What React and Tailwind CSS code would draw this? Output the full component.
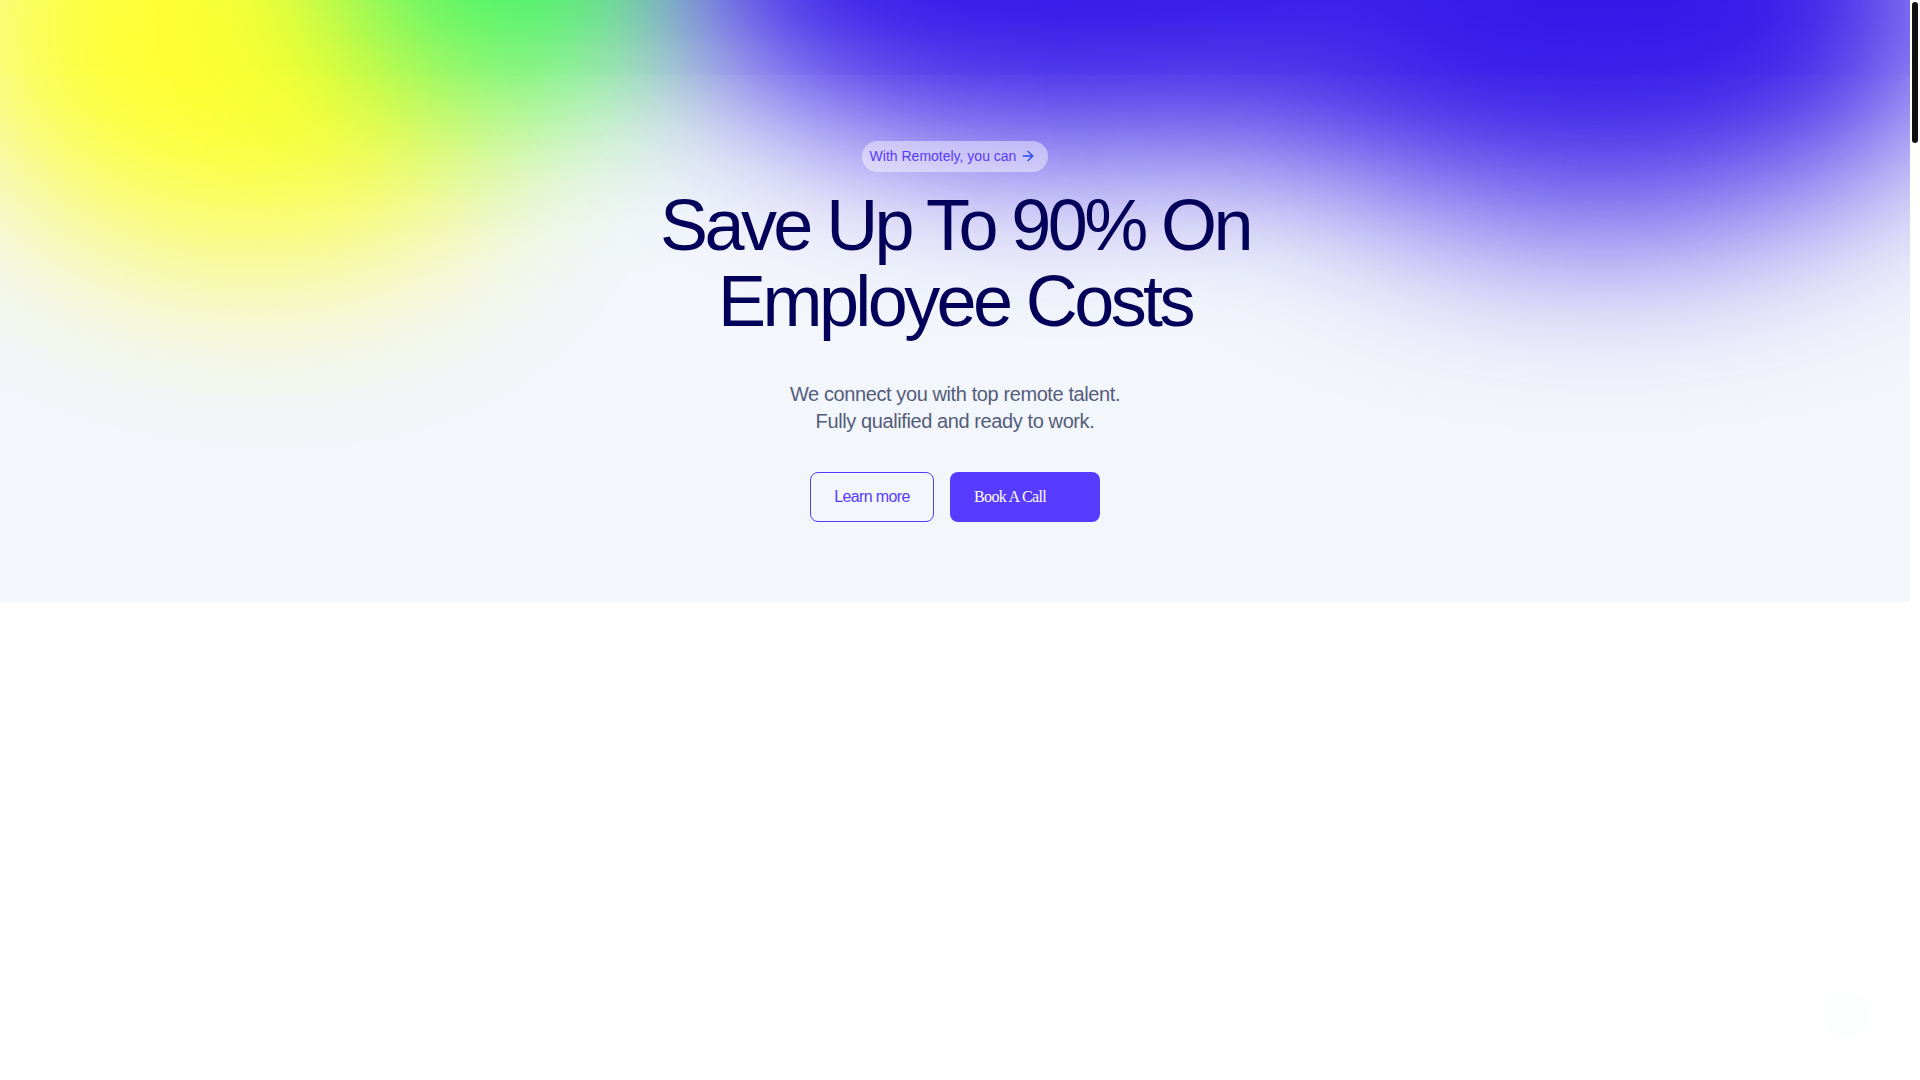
import { ArrowRight } from 'lucide-react';

const blobs = [
    'left-[-60px] top-[-160px] w-[570px] h-[420px] rotate-12 bg-[#feff30] blur-[85px]',
    'left-[330px] top-[-250px] w-[370px] h-[350px] bg-[#3cf35c] blur-[80px]',
    'left-[670px] top-[-230px] w-[790px] h-[380px] bg-[#3517e8] blur-[80px]',
    'left-[1240px] top-[-210px] w-[730px] h-[430px] bg-[#3517e8] blur-[90px]',
];

export default function App() {
    return (
        <div className="flex min-h-screen bg-white font-['Liberation_Sans',Arial,sans-serif]">
            <main className="flex-1 min-w-0">
                <Hero />
            </main>
            <ScrollTrack />
            <div className="fixed right-[50px] bottom-[42px] size-12 rounded-full bg-[#fdffff]" />
        </div>
    );
}

function Hero() {
    return (
        <section className="relative overflow-hidden bg-[#f3f6fb]">
            {/* Colour glow */}
            <div className="absolute inset-0">
                {blobs.map((blob) => (
                    <div key={blob} className={`absolute rounded-[50%] ${blob}`} />
                ))}
            </div>

            <header className="relative h-[75px] backdrop-blur-md" />

            <div className="relative flex flex-col items-center px-6 pt-[66px] pb-20 text-center">
                <a href="#" className="flex items-center gap-1 h-[31px] rounded-full bg-white/45 pl-2 pr-3 pb-0.5 text-sm text-[#573bff]">
                    With Remotely, you can
                    <ArrowRight size={16} className="text-[#2148f5]" />
                </a>

                <h1 className="mt-[15px] text-7xl leading-[76px] tracking-tighter text-[#020059]">
                    Save Up To 90% On
                    <br />
                    Employee Costs
                </h1>

                <p className="mt-[42px] text-xl leading-[27px] tracking-[-0.02em] text-[#535d7b]">
                    We connect you with top remote talent.
                    <br />
                    Fully qualified and ready to work.
                </p>

                <div className="mt-[37px] flex gap-4 text-base tracking-[-0.04em]">
                    <button className="h-[50px] w-[124px] rounded-lg border border-[#573bff] text-[#573bff]">
                        Learn more
                    </button>
                    <button className="h-[50px] w-[150px] rounded-lg bg-[#573bff] pl-6 text-left font-['Liberation_Serif',serif] text-white">
                        Book A Call
                    </button>
                </div>
            </div>
        </section>
    );
}

function ScrollTrack() {
    return (
        <div className="w-[10px] shrink-0 p-0.5">
            <div className="h-[141px] rounded-full bg-[#111]" />
        </div>
    );
}
